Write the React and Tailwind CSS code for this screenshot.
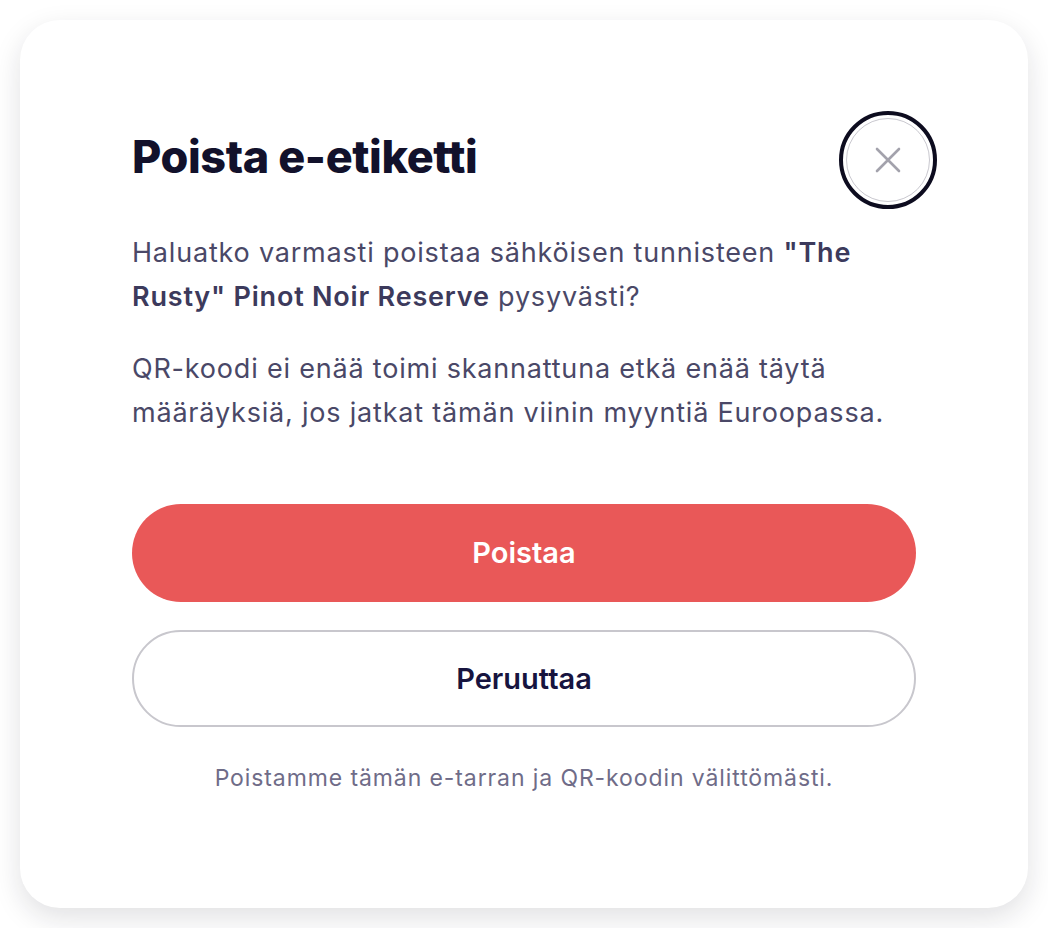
// App.jsx
const App = () => {
  return (
    <div
      className="min-h-screen bg-white p-5"
      style={{ fontFamily: "Inter, 'Noto Sans', sans-serif" }}
    >
      <div className="h-[888px] rounded-[40px] bg-white px-28 pt-[98px] shadow-[0_10px_28px_rgba(20,20,40,0.13)]">
        {/* header */}
        <div className="flex items-center justify-between h-[84px]">
          <h1 className="text-[45px] font-extrabold tracking-[-0.4px] text-[#12112b] -mt-[6px]">
            Poista e-etiketti
          </h1>
          <button className="-mr-[14px] flex h-[84px] w-[84px] items-center justify-center rounded-full border border-[#c9c8cf] bg-white outline-[4px] outline-offset-[3px] outline-solid outline-[#0d0c1f]">
            <svg width="26" height="26" viewBox="0 0 26 26" fill="none">
              <path
                d="M2 2L24 24M24 2L2 24"
                stroke="#a3a2ac"
                strokeWidth="2.6"
                strokeLinecap="round"
              />
            </svg>
          </button>
        </div>

        <p className="mt-[29px] text-[27px] leading-[44px] tracking-[0.8px] text-[#4a4867]">
          Haluatko varmasti poistaa sähköisen tunnisteen{" "}
          <span className="font-semibold text-[#3c3a5c]">
            "The Rusty" Pinot Noir Reserve
          </span>{" "}
          pysyvästi?
        </p>
        <p className="mt-7 text-[27px] leading-[44px] tracking-[0.8px] text-[#4a4867]">
          QR-koodi ei enää toimi skannattuna etkä enää täytä määräyksiä, jos
          jatkat tämän viinin myyntiä Euroopassa.
        </p>

        {/* actions */}
        <div className="mt-[69px] flex flex-col gap-7">
          <button className="h-[98px] w-full rounded-full bg-[#e95858] text-[29px] font-semibold text-white">
            Poistaa
          </button>
          <button className="h-[97px] w-full rounded-full border-2 border-[#c8c7cd] bg-white text-[29px] font-semibold text-[#17143f]">
            Peruuttaa
          </button>
        </div>

        <p className="mt-[35px] text-center text-[23px] leading-8 tracking-[0.9px] text-[#6f6c88]">
          Poistamme tämän e-tarran ja QR-koodin välittömästi.
        </p>
      </div>
    </div>
  );
};

export default App;
